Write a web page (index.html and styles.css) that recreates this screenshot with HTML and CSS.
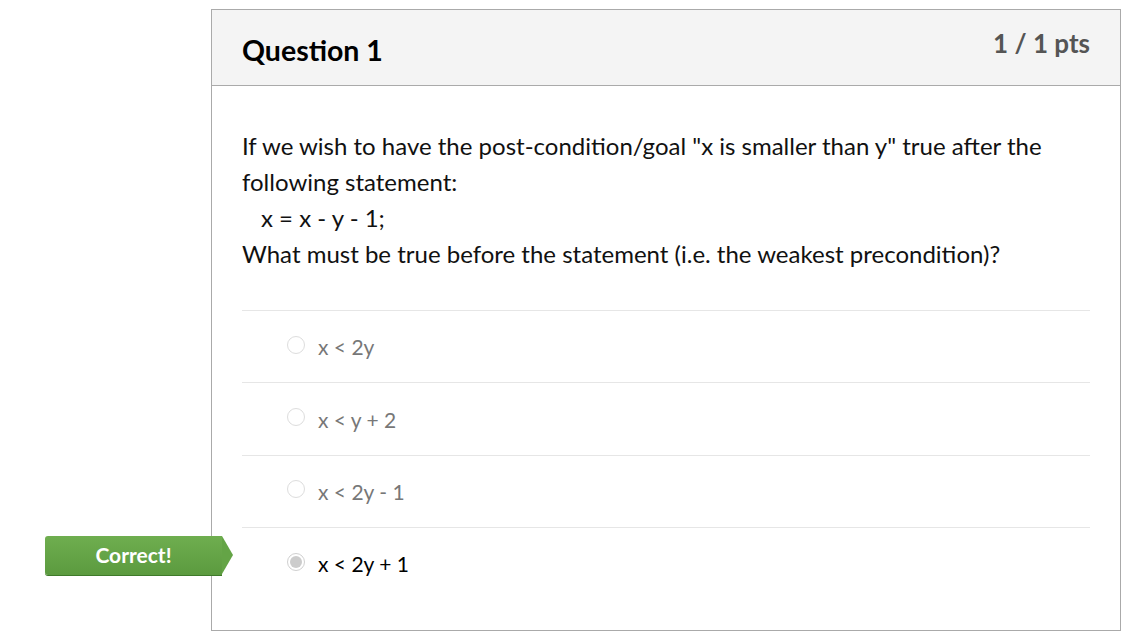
FILE: index.html
```html
<!DOCTYPE html>
<html>
<head>
<meta charset="utf-8">
<link rel="stylesheet" href="styles.css">
</head>
<body>
<div class="question">
  <div class="q-header">
    <h2 class="q-title">Question 1</h2>
    <div class="q-points">1 / 1 pts</div>
  </div>
  <div class="q-body">
    <div class="q-text">
      <p>If we wish to have the post-condition/goal "x is smaller than y" true after the following statement:</p>
      <p class="code">x = x - y - 1;</p>
      <p>What must be true before the statement (i.e. the weakest precondition)?</p>
    </div>
    <div class="answers">
      <div class="answer"><span class="radio"></span><span class="label">x &lt; 2y</span></div>
      <div class="answer"><span class="radio"></span><span class="label">x &lt; y + 2</span></div>
      <div class="answer"><span class="radio"></span><span class="label">x &lt; 2y - 1</span></div>
      <div class="answer selected">
        <div class="badge">Correct!</div>
        <span class="radio"></span><span class="label">x &lt; 2y + 1</span>
      </div>
    </div>
  </div>
</div>
</body>
</html>
```
FILE: styles.css
```css
html, body {
  margin: 0;
  padding: 0;
  background: #fff;
}
body {
  font-family: Lato, "Open Sans", sans-serif;
  color: #111;
}
.question {
  margin: 9px 0 0 211px;
  width: 908px;
  height: 620px;
  border: 1px solid #aaaaaa;
  box-sizing: content-box;
}
.q-header {
  display: flex;
  justify-content: space-between;
  height: 75px;
  background: #f4f4f4;
  border-bottom: 1px solid #aaaaaa;
  padding: 0 30px;
}
.q-title {
  margin: 0;
  font-size: 28.5px;
  font-weight: 700;
  line-height: 80px;
  color: #000;
}
.q-points {
  font-size: 26px;
  font-weight: 700;
  color: #555;
  line-height: 66px;
}
.q-body {
  padding: 42px 30px 0 30px;
}
.q-text {
  font-size: 24px;
  line-height: 36px;
  color: #111;
}
.q-text p {
  margin: 0;
}
.q-text .code {
  padding-left: 19px;
}
.answers {
  margin-top: 38px;
}
.answer {
  position: relative;
  display: flex;
  align-items: center;
  box-sizing: border-box;
  height: 72.4px;
  border-top: 1px solid #e6e6e6;
  padding-left: 45px;
}
.radio {
  width: 16px;
  height: 16px;
  border: 1px solid #dddddd;
  border-radius: 50%;
  background: #fff;
  margin-right: 13px;
  box-sizing: content-box;
  position: relative;
  top: -2px;
}
.label {
  font-size: 21px;
  color: #777;
}
.selected .label {
  color: #000;
}
.selected .radio {
  border-color: #d0d0d0;
}
.selected .radio::after {
  content: "";
  position: absolute;
  left: 2px;
  top: 2px;
  width: 12px;
  height: 12px;
  border-radius: 50%;
  background: #cccccc;
}
.badge {
  position: absolute;
  left: -197px;
  top: 8px;
  width: 177px;
  height: 39px;
  line-height: 38px;
  text-align: center;
  color: #fff;
  font-size: 21px;
  font-weight: 700;
  background: linear-gradient(#6fae4f, #5b9a3f);
  border-radius: 3px 0 0 3px;
  box-shadow: 0 1px 0 #3f7a2a;
}
.badge::after {
  content: "";
  position: absolute;
  right: -11px;
  top: 0;
  width: 0;
  height: 0;
  border-top: 19.5px solid transparent;
  border-bottom: 19.5px solid transparent;
  border-left: 11px solid #64a446;
}
```
